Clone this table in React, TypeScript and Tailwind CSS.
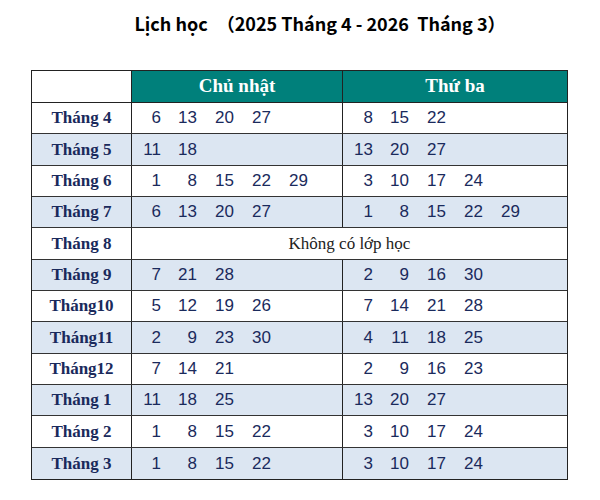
type Row = { month: string; sun: string[]; tue: string[]; off?: boolean };

const rows: Row[] = [
  { month: "Tháng 4", sun: ["6", "13", "20", "27"], tue: ["8", "15", "22"] },
  { month: "Tháng 5", sun: ["11", "18"], tue: ["13", "20", "27"] },
  { month: "Tháng 6", sun: ["1", "8", "15", "22", "29"], tue: ["3", "10", "17", "24"] },
  { month: "Tháng 7", sun: ["6", "13", "20", "27"], tue: ["1", "8", "15", "22", "29"] },
  { month: "Tháng 8", sun: [], tue: [], off: true },
  { month: "Tháng 9", sun: ["7", "21", "28"], tue: ["2", "9", "16", "30"] },
  { month: "Tháng10", sun: ["5", "12", "19", "26"], tue: ["7", "14", "21", "28"] },
  { month: "Tháng11", sun: ["2", "9", "23", "30"], tue: ["4", "11", "18", "25"] },
  { month: "Tháng12", sun: ["7", "14", "21"], tue: ["2", "9", "16", "23"] },
  { month: "Tháng 1", sun: ["11", "18", "25"], tue: ["13", "20", "27"] },
  { month: "Tháng 2", sun: ["1", "8", "15", "22"], tue: ["3", "10", "17", "24"] },
  { month: "Tháng 3", sun: ["1", "8", "15", "22"], tue: ["3", "10", "17", "24"] },
];

// numbers sit in right-aligned slots, like the spaced-out spreadsheet cells
const Days = ({ days }: { days: string[] }) => (
  <div className="grid grid-cols-[29px_36px_37px_37px_37px] items-center text-[17px] text-[#1a2a5c] font-['Liberation_Sans',Arial,sans-serif]">
    {days.map((d, i) => (
      <span key={i} className="text-right">
        {d}
      </span>
    ))}
  </div>
);

export default function App() {
  return (
    <div className="w-[600px] h-[500px] bg-white">
      {/* Title */}
      <div className="flex justify-center pl-10 pt-[10px] h-[70px]">
        <h1 className="text-[18px] font-bold text-black font-['Noto_Sans_CJK_JP','Noto_Sans',sans-serif] whitespace-pre">
          Lịch học　（2025 Tháng 4 - 2026  Tháng 3）
        </h1>
      </div>

      {/* Table */}
      <div className="ml-[31px] w-[537px] border border-[#222]">
        <div className="grid grid-cols-[100px_211px_1fr] h-[32px] border-b border-[#222]">
          <div className="border-r border-[#222] bg-white" />
          <div className="border-r border-[#222] bg-[#00807b] flex items-center justify-center text-white font-bold text-[19px] font-['Liberation_Serif',serif]">
            Chủ nhật
          </div>
          <div className="bg-[#00807b] flex items-center justify-center text-white font-bold text-[19px] font-['Liberation_Serif',serif]">
            Thứ ba
          </div>
        </div>

        {rows.map((r, i) => (
          <div
            key={r.month}
            className={`grid grid-cols-[100px_211px_1fr] h-[31.33px] ${
              i < rows.length - 1 ? "border-b border-[#333]" : ""
            } ${i % 2 === 1 ? "bg-[#dce6f2]" : "bg-white"}`}
          >
            <div className="border-r border-[#222] flex items-center justify-center text-[17px] font-bold text-[#1a2a5c] font-['Liberation_Serif',serif] whitespace-pre">
              {r.month}
            </div>
            {r.off ? (
              <div className="col-span-2 flex items-center justify-center text-[17px] text-[#222] font-['Liberation_Serif',serif]">
                Không có lớp học
              </div>
            ) : (
              <>
                <div className="border-r border-[#222] flex items-center">
                  <Days days={r.sun} />
                </div>
                <div className="flex items-center pl-[1px]">
                  <Days days={r.tue} />
                </div>
              </>
            )}
          </div>
        ))}
      </div>
    </div>
  );
}
